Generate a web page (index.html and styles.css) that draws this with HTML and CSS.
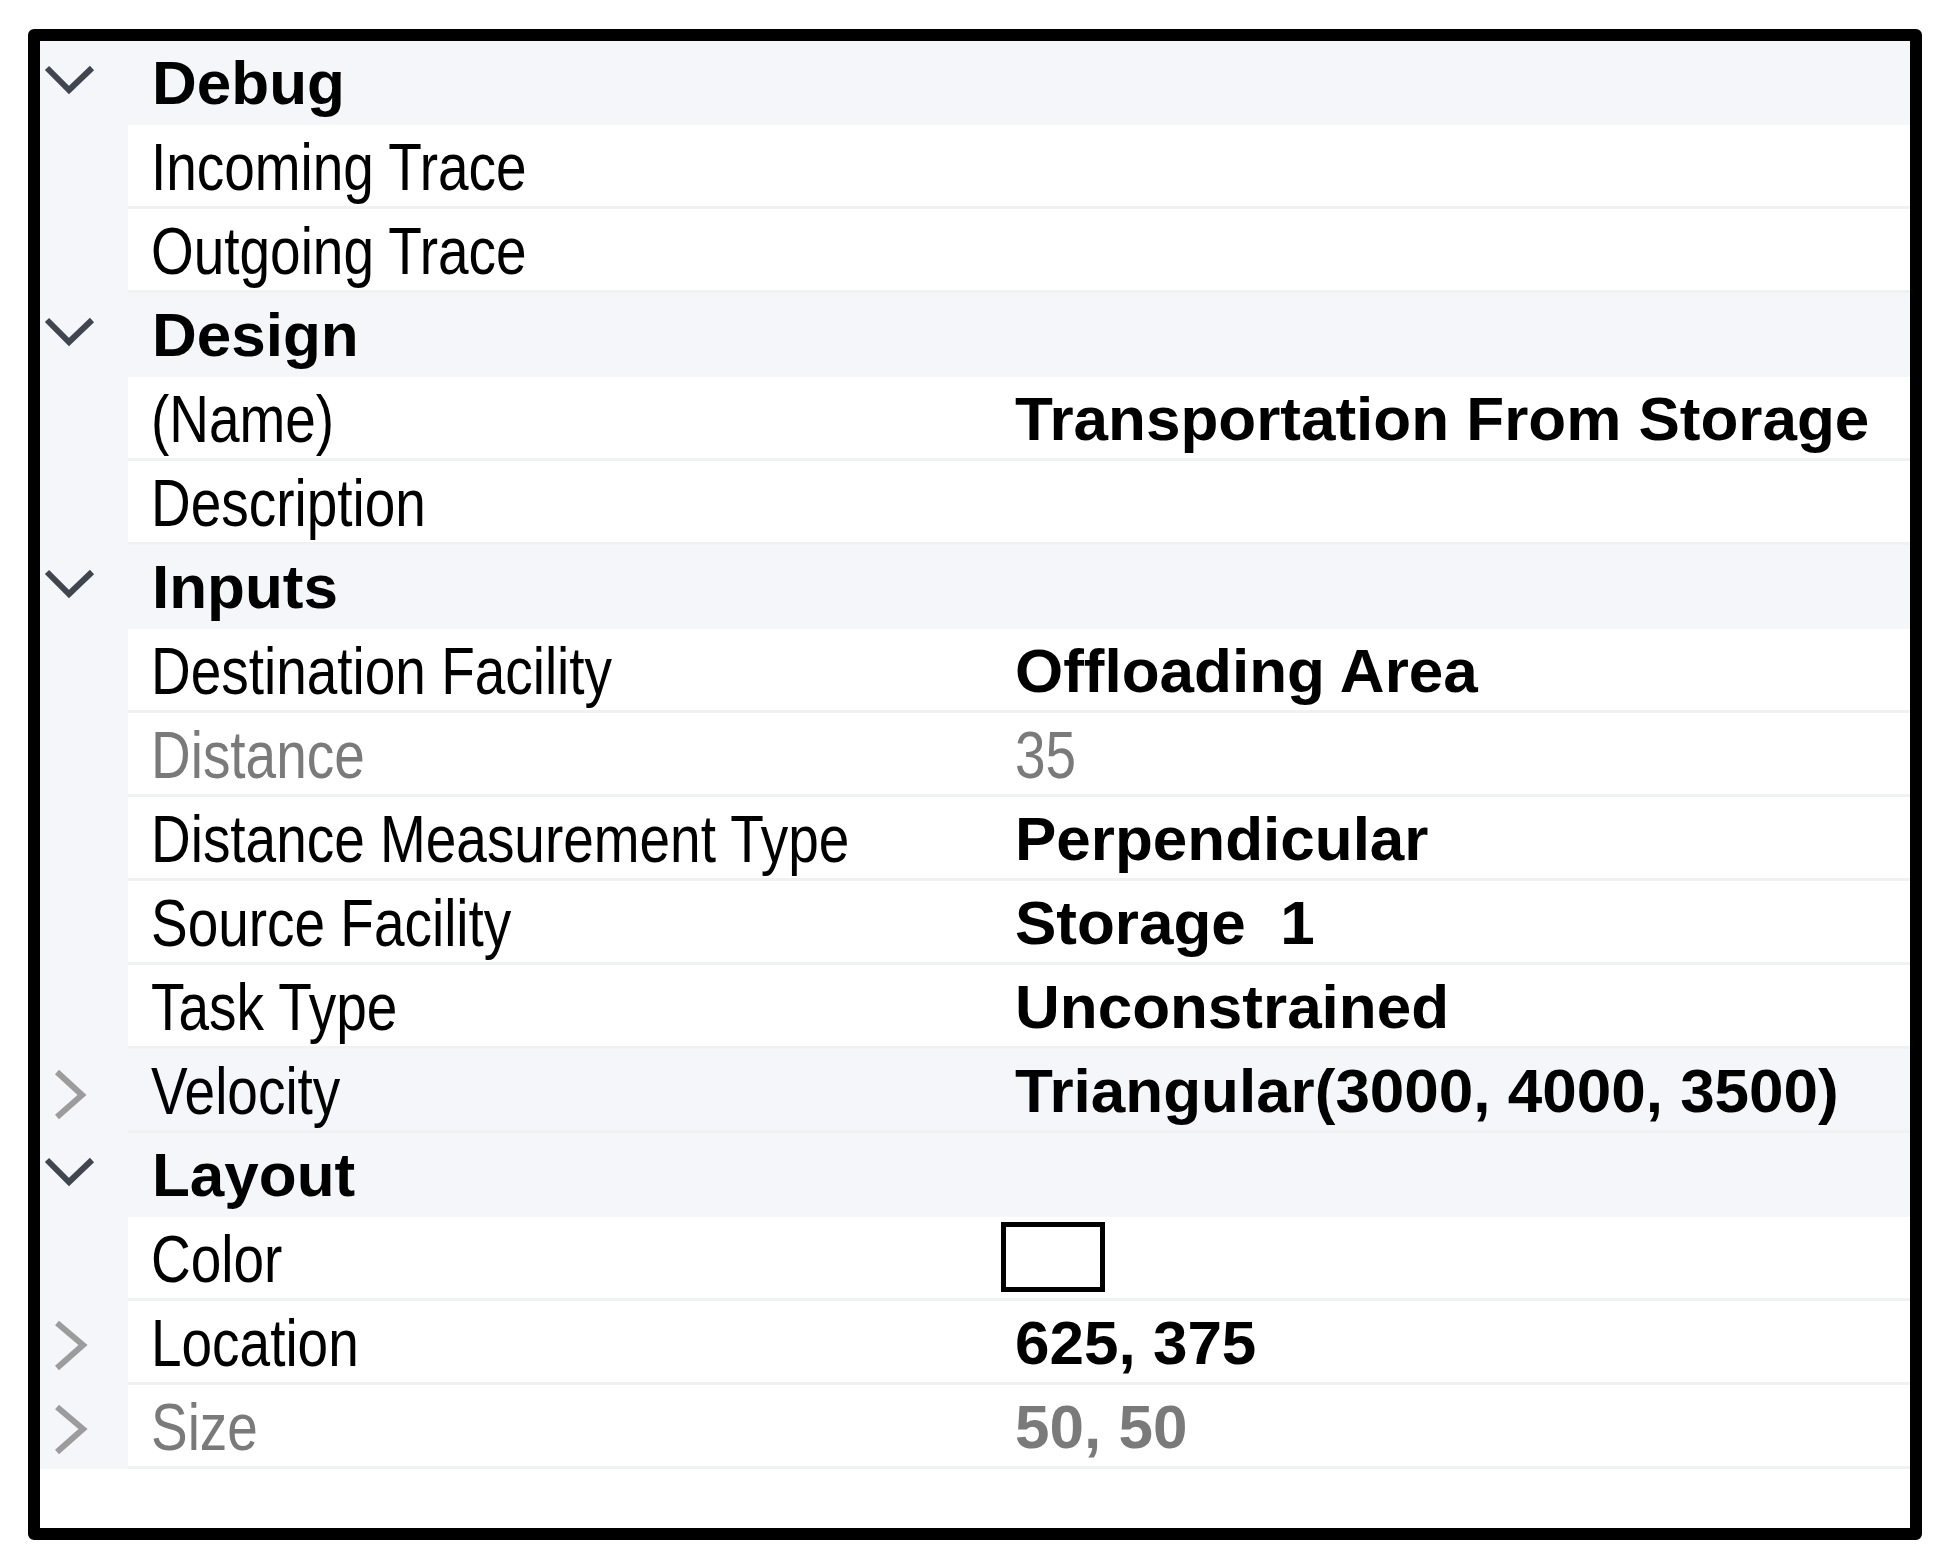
FILE: index.html
```html
<!doctype html>
<html>
<head>
<meta charset="utf-8">
<title>Properties</title>
<link rel="stylesheet" href="styles.css">
</head>

<body>
<div id="props">
    <!-- Debug -->
    <div class="row cat">
        <span class="gut"><svg class="chev" viewBox="0 0 88 84"><polyline points="7,27 29,49 52,27" /></svg></span>
        <span class="name">Debug</span>
        <span class="val"></span>
    </div>
    <div class="row">
        <span class="gut"></span>
        <span class="name"><span class="t">Incoming Trace</span></span>
        <span class="val"></span>
    </div>
    <div class="row">
        <span class="gut"></span>
        <span class="name"><span class="t">Outgoing Trace</span></span>
        <span class="val"></span>
    </div>

    <!-- Design -->
    <div class="row cat">
        <span class="gut"><svg class="chev" viewBox="0 0 88 84"><polyline points="7,27 29,49 52,27" /></svg></span>
        <span class="name">Design</span>
        <span class="val"></span>
    </div>
    <div class="row">
        <span class="gut"></span>
        <span class="name"><span class="t">(Name)</span></span>
        <span class="val set">Transportation From Storage</span>
    </div>
    <div class="row">
        <span class="gut"></span>
        <span class="name"><span class="t">Description</span></span>
        <span class="val"></span>
    </div>

    <!-- Inputs -->
    <div class="row cat">
        <span class="gut"><svg class="chev" viewBox="0 0 88 84"><polyline points="7,27 29,49 52,27" /></svg></span>
        <span class="name">Inputs</span>
        <span class="val"></span>
    </div>
    <div class="row">
        <span class="gut"></span>
        <span class="name"><span class="t">Destination Facility</span></span>
        <span class="val set">Offloading Area</span>
    </div>
    <div class="row off">
        <span class="gut"></span>
        <span class="name"><span class="t">Distance</span></span>
        <span class="val"><span class="t">35</span></span>
    </div>
    <div class="row">
        <span class="gut"></span>
        <span class="name"><span class="t">Distance Measurement Type</span></span>
        <span class="val set">Perpendicular</span>
    </div>
    <div class="row">
        <span class="gut"></span>
        <span class="name"><span class="t">Source Facility</span></span>
        <span class="val set">Storage&nbsp; 1</span>
    </div>
    <div class="row">
        <span class="gut"></span>
        <span class="name"><span class="t">Task Type</span></span>
        <span class="val set">Unconstrained</span>
    </div>
    <div class="row hover">
        <span class="gut"><svg class="chev shut" viewBox="0 0 88 84"><polyline points="17,23 42,46 17,68" /></svg></span>
        <span class="name"><span class="t">Velocity</span></span>
        <span class="val set">Triangular(3000, 4000, 3500)</span>
    </div>

    <!-- Layout -->
    <div class="row cat">
        <span class="gut"><svg class="chev" viewBox="0 0 88 84"><polyline points="7,27 29,49 52,27" /></svg></span>
        <span class="name">Layout</span>
        <span class="val"></span>
    </div>
    <div class="row">
        <span class="gut"></span>
        <span class="name"><span class="t">Color</span></span>
        <span class="val swatch-cell"><i class="swatch"></i></span>
    </div>
    <div class="row">
        <span class="gut"><svg class="chev shut" viewBox="0 0 88 84"><polyline points="17,22 43,44 17,67" /></svg></span>
        <span class="name"><span class="t">Location</span></span>
        <span class="val set">625, 375</span>
    </div>
    <div class="row off">
        <span class="gut"><svg class="chev shut" viewBox="0 0 88 84"><polyline points="17,22 43,44 17,67" /></svg></span>
        <span class="name"><span class="t">Size</span></span>
        <span class="val set">50, 50</span>
    </div>
</div>
</body>
</html>
```

FILE: styles.css
```css
body{
	margin:0;
	padding:29px 0 0 28px;
	background:#fff;
}
/* panel: black frame round the grid */
#props{
	box-sizing:border-box;
	width:1894px;
	height:1511px;
	border:12px solid #000;
	border-radius:6px;
	background:#fff;
	overflow:hidden;
}
.row{
	display:grid;
	grid-template-columns:88px 865px 1fr;
	height:84px;
	line-height:84px;
	white-space:nowrap;
	color:#000;
	font-family:"Liberation Sans", Arial, sans-serif;
}
.gut{background:#f4f6fa; height:84px;}
.chev{display:block; width:88px; height:84px;}
.chev polyline{fill:none; stroke:#3f4650; stroke-width:6;}
.chev.shut polyline{stroke:#9c9c9c;}

.name,.val{
	font-size:67px;
	box-shadow:inset 0 -3px 0 #f0f1f3;
	overflow:hidden;
}
.name{padding-left:23px;}
.val{padding-left:22px;}
/* the grid font is tall and narrow: squeeze the regular text */
.t{
	display:inline-block;
	transform:scaleX(0.82);
	transform-origin:0 50%;
}
.val.set{
	font-size:62px;
	font-weight:bold;
}

/* category rows */
.cat .name,.cat .val{background:#f4f6fa; box-shadow:none;}
.cat .name{
	font-size:62px;
	font-weight:bold;
	padding-left:24px;
}

.hover .name,.hover .val{background:#f4f6fa;}
.off .name,.off .val{color:#7a7a7a;}

.swatch-cell{padding-left:8px;}
.swatch{
	display:inline-block;
	box-sizing:border-box;
	width:104px;
	height:70px;
	margin-top:5px;
	vertical-align:top;
	border:5px solid #000;
	background:#fff;
}
```
